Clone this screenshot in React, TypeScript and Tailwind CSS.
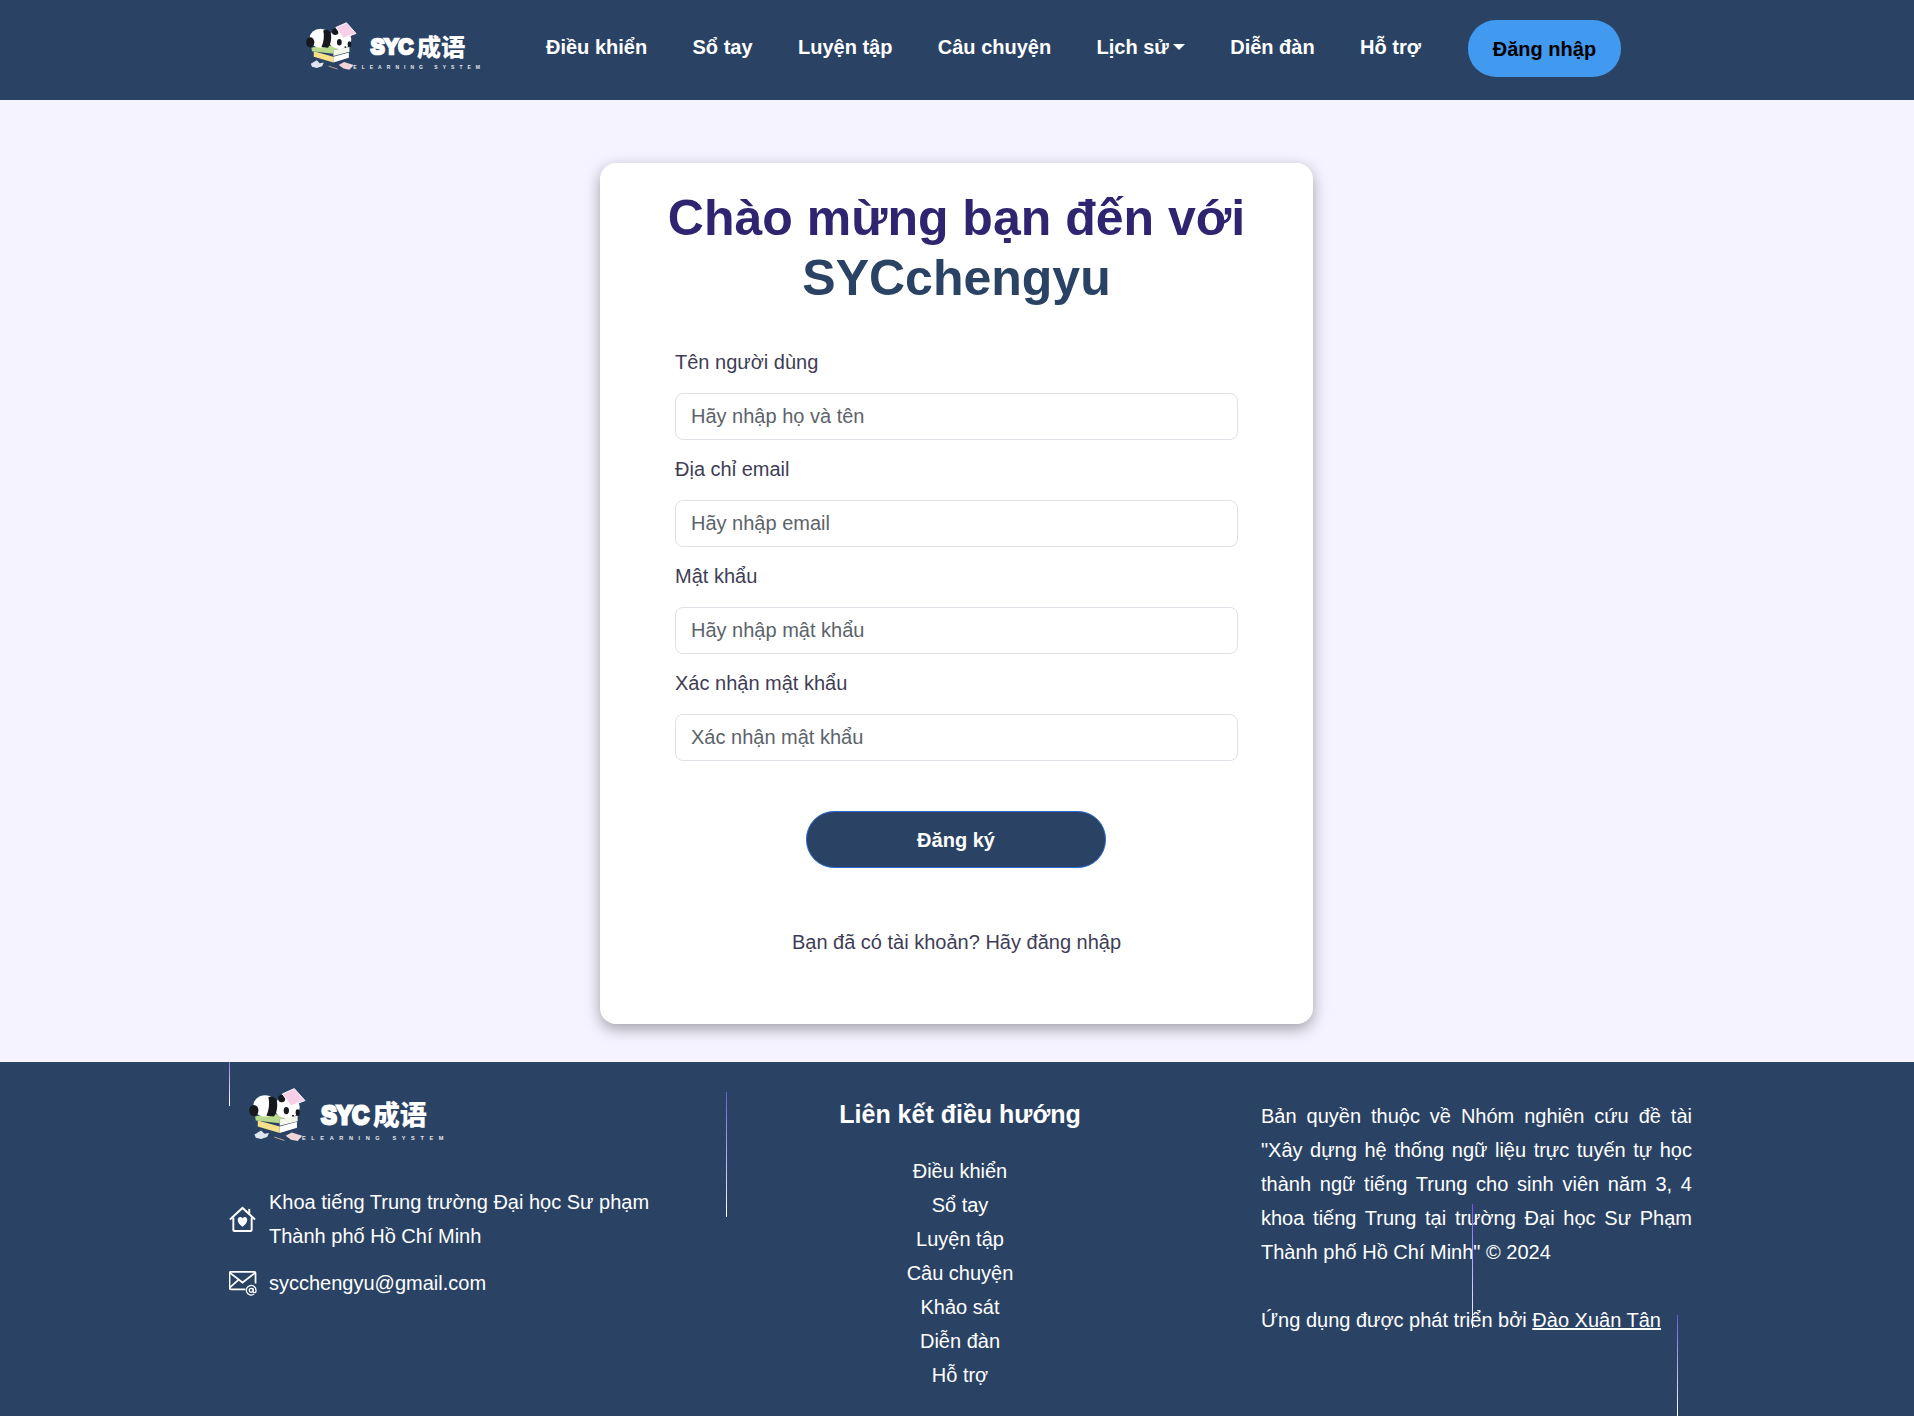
const navItems = ["Điều khiển", "Sổ tay", "Luyện tập", "Câu chuyện"];
const footerLinks = ["Điều khiển", "Sổ tay", "Luyện tập", "Câu chuyện", "Khảo sát", "Diễn đàn", "Hỗ trợ"];

function Logo({ className }: { className: string }) {
  return (
    <svg viewBox="0 0 570 180" className={className}>
      <g transform="translate(-3.3 10.7) scale(0.892)">
        {/* small books on the floor */}
        <path d="M40 152 L60 140 L70 150 L84 148 L78 160 L60 166 L44 162 Z" fill="#dfe6ee" />
        <path d="M134 156 L152 146 L184 156 L170 172 L150 168 Z" fill="#f0d4d6" />
        <path d="M100 160 L130 170" stroke="#c9a38a" strokeWidth="3" />
        {/* stack of books */}
        <path d="M50 110 L116 128 L116 148 L50 128 Z" fill="#f6e08a" />
        <path d="M116 128 L168 114 L168 132 L116 148 Z" fill="#fff" />
        <path d="M42 98 L80 90 L170 96 L116 106 L116 118 L44 110 Z" fill="#b8d98c" />
        <path d="M116 106 L170 96 L170 112 L116 126 Z" fill="#f4f6ea" />
        {/* panda */}
        <ellipse cx="72" cy="66" rx="36" ry="32" fill="#fff" />
        <ellipse cx="38" cy="80" rx="14" ry="17" fill="#16181c" />
        <ellipse cx="138" cy="70" rx="38" ry="33" fill="#fff" />
        <path d="M82 40 C94 34 106 42 108 54 C110 72 106 90 98 98 L76 96 C84 78 86 58 82 40 Z" fill="#16181c" />
        <circle cx="122" cy="44" r="11" fill="#16181c" />
        <ellipse cx="136" cy="80" rx="8" ry="11" fill="#16181c" />
        <ellipse cx="170" cy="86" rx="6" ry="10" fill="#16181c" />
        <circle cx="156" cy="96" r="3" fill="#16181c" />
        {/* book on head */}
        <path d="M124 30 L160 14 L192 50 L150 66 Z" fill="#f7d0e8" stroke="#fff" strokeWidth="3" />
      </g>
      {/* wordmark */}
      <text x="212" y="118" fontFamily="'Liberation Sans', sans-serif" fontWeight="700" fontSize="68" fill="#fff" stroke="#fff" strokeWidth="8" textLength="128" lengthAdjust="spacingAndGlyphs">SYC</text>
      <text x="350" y="122" fontFamily="'Noto Sans CJK SC', sans-serif" fontWeight="900" fontSize="72" fill="#fff" textLength="146" lengthAdjust="spacingAndGlyphs">成语</text>
      <text x="160" y="162" fontFamily="'Liberation Sans', sans-serif" fontWeight="700" fontSize="15" fill="#e5e7eb" textLength="380" lengthAdjust="spacing">ELEARNING  SYSTEM</text>
    </svg>
  );
}

function Field({ label, placeholder }: { label: string; placeholder: string }) {
  return (
    <div>
      <label className="block h-[60px] pt-[17px] text-[20px] leading-[24px] text-[#3f3d56]">{label}</label>
      <input
        placeholder={placeholder}
        className="block w-full h-[47px] px-[15px] bg-white border border-[#dee2e6] rounded-lg text-[20px] placeholder:text-[#5c636a] outline-none"
      />
    </div>
  );
}

export default function App() {
  return (
    <div className="relative h-[1416px] overflow-hidden bg-[#f5f3ff] font-['Liberation_Sans',Arial,sans-serif]">
      <header className="h-[100px] bg-[#2a4365] flex items-center">
        <a className="ml-[300px] mt-[-10px]">
          <Logo className="w-[190px] h-[60px]" />
        </a>
        <nav className="ml-[56px] flex items-center gap-[45.4px] text-[20px] font-bold text-white mt-[-6px]">
          {navItems.map((item) => (
            <a key={item}>{item}</a>
          ))}
          <a className="flex items-center">
            Lịch sử
            <span className="ml-[4px] w-0 h-0 border-x-[6px] border-x-transparent border-t-[6px] border-t-white" />
          </a>
          <a>Diễn đàn</a>
          <a>Hỗ trợ</a>
        </nav>
        <button className="ml-[47px] mt-[-3px] w-[153px] h-[57px] rounded-[28px] bg-[#4299f0] text-[20px] font-bold text-black">
          Đăng nhập
        </button>
      </header>

      <main className="h-[962px] pt-[63px]">
        <div className="ml-[600px] w-[713px] h-[861px] bg-white rounded-[16px] shadow-[0_5px_15px_rgba(0,0,0,0.35)] pt-[25px]">
          <h1 className="text-center text-[50px] leading-[60px] font-bold text-[#2f2470]">
            Chào mừng bạn đến với
            <br />
            <span className="text-[#2a4365]">SYCchengyu</span>
          </h1>
          <div className="px-[75px]">
            <div className="mt-[25px]">
              <Field label="Tên người dùng" placeholder="Hãy nhập họ và tên" />
              <Field label="Địa chỉ email" placeholder="Hãy nhập email" />
              <Field label="Mật khẩu" placeholder="Hãy nhập mật khẩu" />
              <Field label="Xác nhận mật khẩu" placeholder="Xác nhận mật khẩu" />
            </div>
            <button className="block ml-[131px] mt-[50px] w-[300px] h-[57px] rounded-[28px] bg-[#2a4365] border border-[#2b6cd4] text-[20px] font-bold text-white">
              Đăng ký
            </button>
            <p className="mt-[62px] text-center text-[20px] leading-[24px] text-[#3f3d56]">
              Bạn đã có tài khoản? Hãy đăng nhập
            </p>
          </div>
        </div>
      </main>

      <footer className="h-[354px] bg-[#2a4365] text-white text-[20px] leading-[34px]">
        <div className="mx-auto w-[1470px] flex">
          <div className="w-[490px] pl-[7px] pt-[18px]">
            <Logo className="ml-[13px] w-[213px] h-[67px]" />
            <div className="mt-[38px] flex items-center gap-[13px]">
              <svg viewBox="0 0 28 28" className="w-[27px] h-[27px] shrink-0" fill="none" stroke="#fff" strokeWidth="2">
                <path d="M1 14 L14 2 L27 14" />
                <path d="M21 3 V8" />
                <path d="M4.5 12 V25 a1 1 0 0 0 1 1 H22.5 a1 1 0 0 0 1 -1 V12" />
                <path d="M14 21.5 C7 17 8.5 11 12 11.5 C13 11.7 13.7 12.3 14 13 C14.3 12.3 15 11.7 16 11.5 C19.5 11 21 17 14 21.5 Z" fill="#fff" stroke="none" />
              </svg>
              <p>
                Khoa tiếng Trung trường Đại học Sư phạm
                <br />
                Thành phố Hồ Chí Minh
              </p>
            </div>
            <div className="mt-[13px] flex items-center gap-[11px]">
              <svg viewBox="0 0 30 26" className="w-[29px] h-[25px] shrink-0" fill="none" stroke="#fff" strokeWidth="1.8">
                <path d="M17 19 H2 a1.5 1.5 0 0 1 -1.5 -1.5 V2 A1.5 1.5 0 0 1 2 0.8 H26 a1.5 1.5 0 0 1 1.5 1.5 V13" />
                <path d="M1 2 L14 12 L27 2" />
                <path d="M1 17 L10 9" />
                <g strokeWidth="1.3">
                  <circle cx="23" cy="20" r="2" />
                  <path d="M25 18 V21 a1.5 1.5 0 0 0 3 0 V20 a5 5 0 1 0 -2 4" />
                </g>
              </svg>
              <p>sycchengyu@gmail.com</p>
            </div>
          </div>

          <div className="w-[496px] pt-[35px] text-center">
            <h3 className="text-[25px] leading-[34px] font-bold">Liên kết điều hướng</h3>
            <ul className="mt-[23px]">
              {footerLinks.map((link) => (
                <li key={link}>{link}</li>
              ))}
            </ul>
          </div>

          <div className="ml-[53px] w-[431px] pt-[37px]">
            <p className="text-justify">
              Bản quyền thuộc về Nhóm nghiên cứu đề tài "Xây dựng hệ thống ngữ liệu trực tuyến tự học thành ngữ tiếng
              Trung cho sinh viên năm 3, 4 khoa tiếng Trung tại trường Đại học Sư Phạm Thành phố Hồ Chí Minh" © 2024
            </p>
            <p className="mt-[34px]">
              Ứng dụng được phát triển bởi <a className="underline">Đào Xuân Tân</a>
            </p>
          </div>
        </div>
      </footer>

      {/* thin decorative lines lying over the footer */}
      <div className="absolute left-[229px] top-[1062px] w-px h-[44px] bg-gradient-to-b from-[#9f7aea] to-white" />
      <div className="absolute left-[726px] top-[1092px] w-px h-[125px] bg-gradient-to-b from-[#6b5bd6] to-white" />
      <div className="absolute left-[1472px] top-[1204px] w-px h-[124px] bg-gradient-to-b from-[#7c4dff] to-white" />
      <div className="absolute left-[1677px] top-[1315px] w-px h-[101px] bg-gradient-to-b from-[#6b5bd6] to-white" />
    </div>
  );
}
